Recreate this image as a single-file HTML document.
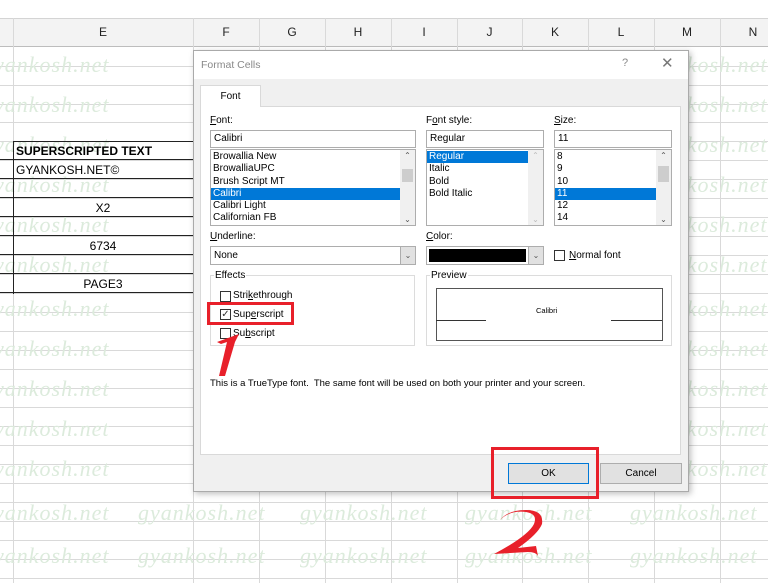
<!DOCTYPE html>
<html><head><meta charset="utf-8"><style>
*{margin:0;padding:0;box-sizing:border-box}
body{width:768px;height:583px;overflow:hidden;background:#fff;font-family:"Liberation Sans",sans-serif;position:relative;font-size:10px;color:#000}
.a{position:absolute}
.t{position:absolute;z-index:2}
.vl{position:absolute;top:18px;bottom:0;width:1px;background:#d9d9d9}
.hl{position:absolute;left:0;right:0;height:1px;background:#d9d9d9}
.ch{position:absolute;top:18px;height:29px;line-height:29px;text-align:center;font-size:12px;color:#222}
.wm{position:absolute;font-family:"Liberation Serif",serif;font-style:italic;font-size:22px;color:#dcebdc;letter-spacing:1px;white-space:nowrap;z-index:1}
.box{position:absolute;background:#fff;border:1px solid #adadad}
.lb{position:absolute;font-size:10px;white-space:nowrap}
.li{height:12.3px;line-height:12.3px;padding-left:2px;font-size:10px;white-space:nowrap}
.sel{background:#0078d7;color:#fff}
.sb{position:absolute;right:0;top:0;bottom:0;width:15px;background:#f0f0f0}
.cb{position:absolute;width:11px;height:11px;border:1px solid #333;background:#fff}
.btn{position:absolute;background:#e1e1e1;border:1px solid #adadad;text-align:center;font-size:10px;height:21px;line-height:19px}
.dlg{z-index:5}
</style></head><body>
<div class="a" style="left:0;top:18px;width:768px;height:29px;background:#f3f3f3;border-bottom:1px solid #bdbdbd;border-top:1px solid #d4d4d4"></div>
<div class="vl" style="left:13px"></div><div class="vl" style="left:193px"></div><div class="vl" style="left:259px"></div><div class="vl" style="left:325px"></div><div class="vl" style="left:391px"></div><div class="vl" style="left:457px"></div><div class="vl" style="left:522px"></div><div class="vl" style="left:588px"></div><div class="vl" style="left:654px"></div><div class="vl" style="left:720px"></div>
<div class="ch" style="left:13px;width:180px">E</div><div class="ch" style="left:193px;width:66px">F</div><div class="ch" style="left:259px;width:66px">G</div><div class="ch" style="left:325px;width:66px">H</div><div class="ch" style="left:391px;width:66px">I</div><div class="ch" style="left:457px;width:65px">J</div><div class="ch" style="left:522px;width:66px">K</div><div class="ch" style="left:588px;width:66px">L</div><div class="ch" style="left:654px;width:66px">M</div><div class="ch" style="left:720px;width:66px">N</div>
<div class="hl" style="top:66px"></div><div class="hl" style="top:85px"></div><div class="hl" style="top:104px"></div><div class="hl" style="top:122px"></div><div class="hl" style="top:141px"></div><div class="hl" style="top:160px"></div><div class="hl" style="top:179px"></div><div class="hl" style="top:198px"></div><div class="hl" style="top:217px"></div><div class="hl" style="top:236px"></div><div class="hl" style="top:255px"></div><div class="hl" style="top:274px"></div><div class="hl" style="top:293px"></div><div class="hl" style="top:312px"></div><div class="hl" style="top:331px"></div><div class="hl" style="top:350px"></div><div class="hl" style="top:369px"></div><div class="hl" style="top:388px"></div><div class="hl" style="top:407px"></div><div class="hl" style="top:426px"></div><div class="hl" style="top:445px"></div><div class="hl" style="top:464px"></div><div class="hl" style="top:483px"></div><div class="hl" style="top:502px"></div><div class="hl" style="top:521px"></div><div class="hl" style="top:540px"></div><div class="hl" style="top:559px"></div><div class="hl" style="top:578px"></div>
<div class="wm" style="left:-18px;top:52px">gyankosh.net</div><div class="wm" style="left:-18px;top:92px">gyankosh.net</div><div class="wm" style="left:-18px;top:132px">gyankosh.net</div><div class="wm" style="left:-18px;top:172px">gyankosh.net</div><div class="wm" style="left:-18px;top:212px">gyankosh.net</div><div class="wm" style="left:-18px;top:252px">gyankosh.net</div><div class="wm" style="left:-18px;top:296px">gyankosh.net</div><div class="wm" style="left:-18px;top:336px">gyankosh.net</div><div class="wm" style="left:-18px;top:376px">gyankosh.net</div><div class="wm" style="left:-18px;top:416px">gyankosh.net</div><div class="wm" style="left:-18px;top:456px">gyankosh.net</div><div class="wm" style="left:-18px;top:500px">gyankosh.net</div><div class="wm" style="left:-18px;top:543px">gyankosh.net</div>
<div class="wm" style="left:138px;top:500px">gyankosh.net</div><div class="wm" style="left:138px;top:543px">gyankosh.net</div>
<div class="wm" style="left:300px;top:500px">gyankosh.net</div><div class="wm" style="left:300px;top:543px">gyankosh.net</div>
<div class="wm" style="left:465px;top:500px">gyankosh.net</div><div class="wm" style="left:465px;top:543px">gyankosh.net</div>
<div class="wm" style="left:630px;top:500px">gyankosh.net</div><div class="wm" style="left:630px;top:543px">gyankosh.net</div>
<div class="wm" style="left:640px;top:52px">gyankosh.net</div><div class="wm" style="left:640px;top:92px">gyankosh.net</div><div class="wm" style="left:640px;top:132px">gyankosh.net</div><div class="wm" style="left:640px;top:172px">gyankosh.net</div><div class="wm" style="left:640px;top:212px">gyankosh.net</div><div class="wm" style="left:640px;top:252px">gyankosh.net</div><div class="wm" style="left:640px;top:296px">gyankosh.net</div><div class="wm" style="left:640px;top:336px">gyankosh.net</div><div class="wm" style="left:640px;top:376px">gyankosh.net</div><div class="wm" style="left:640px;top:416px">gyankosh.net</div><div class="wm" style="left:640px;top:456px">gyankosh.net</div>

<div class="t" style="left:13px;top:141px;width:180px;height:153px;border-top:1px solid #222;border-left:1px solid #222"></div>
<div class="t" style="left:0;top:159px;width:193px;height:1px;background:#222"></div>
<div class="t" style="left:0;top:178px;width:193px;height:1px;background:#222"></div>
<div class="t" style="left:0;top:197px;width:193px;height:1px;background:#222"></div>
<div class="t" style="left:0;top:216px;width:193px;height:1px;background:#222"></div>
<div class="t" style="left:0;top:235px;width:193px;height:1px;background:#222"></div>
<div class="t" style="left:0;top:254px;width:193px;height:1px;background:#222"></div>
<div class="t" style="left:0;top:273px;width:193px;height:1px;background:#222"></div>
<div class="t" style="left:0;top:292px;width:193px;height:1px;background:#222"></div>
<div class="t" style="left:16px;top:144px;font-size:12px;font-weight:bold">SUPERSCRIPTED TEXT</div>
<div class="t" style="left:16px;top:163px;font-size:12px">GYANKOSH.NET©</div>
<div class="t" style="left:13px;top:201px;width:180px;text-align:center;font-size:12px">X2</div>
<div class="t" style="left:13px;top:239px;width:180px;text-align:center;font-size:12px">6734</div>
<div class="t" style="left:13px;top:277px;width:180px;text-align:center;font-size:12px">PAGE3</div>

<div class="a dlg" style="left:193px;top:50px;width:496px;height:442px;">
<div class="a" style="left:0;top:0;width:496px;height:442px;background:#f0f0f0;border:1px solid #aaa;box-shadow:2px 2px 6px rgba(0,0,0,.25)"></div>
<div class="a" style="left:1px;top:1px;width:494px;height:28px;background:#fff"></div>
<div class="a" style="left:8px;top:9px;font-size:10.5px;color:#888">Format Cells</div>
<div class="a" style="left:429px;top:7px;font-size:11px;color:#888">?</div>
<div class="a" style="left:468px;top:4px;font-size:15px;color:#777">✕</div>
<div class="a" style="left:7px;top:56px;width:481px;height:349px;background:#fff;border:1px solid #d9d9d9"></div>
<div class="a" style="left:7px;top:35px;width:61px;height:22px;background:#fff;border:1px solid #d9d9d9;border-bottom:none;text-align:center;line-height:21px;font-size:10px">Font</div>
</div>

<div class="dlg a" style="left:0;top:0;width:768px;height:583px">
<div class="lb" style="left:210px;top:115px"><u>F</u>ont:</div>
<div class="box" style="left:210px;top:130px;width:206px;height:18px"><span style="position:absolute;left:3px;top:2px;font-size:10px">Calibri</span></div>
<div class="box" style="left:210px;top:149px;width:206px;height:77px;padding-top:1px">
<div class="li">Browallia New</div><div class="li">BrowalliaUPC</div><div class="li">Brush Script MT</div><div class="li sel" style="margin-right:15px">Calibri</div><div class="li">Calibri Light</div><div class="li">Californian FB</div>
<div class="sb"><div style="position:absolute;left:2px;top:19px;width:11px;height:13px;background:#cdcdcd"></div><div style="position:absolute;top:1px;width:15px;text-align:center;font-size:8px;color:#555">⌃</div><div style="position:absolute;bottom:1px;width:15px;text-align:center;font-size:8px;color:#555">⌄</div></div></div>

<div class="lb" style="left:426px;top:115px">F<u>o</u>nt style:</div>
<div class="box" style="left:426px;top:130px;width:118px;height:18px"><span style="position:absolute;left:3px;top:2px;font-size:10px">Regular</span></div>
<div class="box" style="left:426px;top:149px;width:118px;height:77px;padding-top:1px">
<div class="li sel" style="margin-right:15px">Regular</div><div class="li">Italic</div><div class="li">Bold</div><div class="li">Bold Italic</div>
<div class="sb"><div style="position:absolute;top:1px;width:15px;text-align:center;font-size:8px;color:#bbb">⌃</div><div style="position:absolute;bottom:1px;width:15px;text-align:center;font-size:8px;color:#bbb">⌄</div></div></div>

<div class="lb" style="left:554px;top:115px"><u>S</u>ize:</div>
<div class="box" style="left:554px;top:130px;width:118px;height:18px"><span style="position:absolute;left:3px;top:2px;font-size:10px">11</span></div>
<div class="box" style="left:554px;top:149px;width:118px;height:77px;padding-top:1px">
<div class="li">8</div><div class="li">9</div><div class="li">10</div><div class="li sel" style="margin-right:15px">11</div><div class="li">12</div><div class="li">14</div>
<div class="sb"><div style="position:absolute;left:2px;top:16px;width:11px;height:16px;background:#cdcdcd"></div><div style="position:absolute;top:1px;width:15px;text-align:center;font-size:8px;color:#555">⌃</div><div style="position:absolute;bottom:1px;width:15px;text-align:center;font-size:8px;color:#555">⌄</div></div></div>

<div class="lb" style="left:210px;top:231px"><u>U</u>nderline:</div>
<div class="box" style="left:210px;top:246px;width:206px;height:19px"><span style="position:absolute;left:3px;top:3px;font-size:10px">None</span><div style="position:absolute;right:0;top:0;width:15px;height:17px;background:#e1e1e1;border-left:1px solid #adadad;text-align:center;font-size:8px;color:#555;line-height:17px">⌄</div></div>
<div class="lb" style="left:426px;top:231px"><u>C</u>olor:</div>
<div class="box" style="left:426px;top:246px;width:118px;height:19px"><div style="position:absolute;left:2px;top:2px;width:97px;height:13px;background:#000"></div><div style="position:absolute;right:0;top:0;width:15px;height:17px;background:#e1e1e1;border-left:1px solid #adadad;text-align:center;font-size:8px;color:#555;line-height:17px">⌄</div></div>
<div class="cb" style="left:554px;top:250px"></div>
<div class="lb" style="left:569px;top:250px"><u>N</u>ormal font</div>

<div class="a" style="left:210px;top:275px;width:205px;height:71px;border:1px solid #dcdcdc"></div>
<div class="lb" style="left:214px;top:270px;background:#fff;padding:0 1px">Effects</div>
<div class="cb" style="left:220px;top:291px"></div><div class="lb" style="left:233px;top:290px">Stri<u>k</u>ethrough</div>
<div class="cb" style="left:220px;top:309px;font-size:10px;line-height:9px;text-align:center;color:#333">✓</div><div class="lb" style="left:233px;top:309px">Sup<u>e</u>rscript</div>
<div class="cb" style="left:220px;top:328px"></div><div class="lb" style="left:233px;top:328px">Su<u>b</u>script</div>
<div class="a" style="left:426px;top:275px;width:246px;height:71px;border:1px solid #dcdcdc"></div>
<div class="lb" style="left:430px;top:270px;background:#fff;padding:0 1px">Preview</div>
<div class="a" style="left:436px;top:288px;width:227px;height:53px;border:1px solid #555"></div>
<div class="a" style="left:436px;top:320px;width:50px;height:1px;background:#333"></div>
<div class="a" style="left:611px;top:320px;width:51px;height:1px;background:#333"></div>
<div class="a" style="left:536px;top:306px;font-size:7.5px">Calibri</div>
<div class="lb" style="left:210px;top:378px;font-size:9.5px">This is a TrueType font.&nbsp; The same font will be used on both your printer and your screen.</div>

<div class="btn" style="left:508px;top:463px;width:81px;border:1px solid #0078d7">OK</div>
<div class="btn" style="left:600px;top:463px;width:82px">Cancel</div>

<div class="a" style="left:207px;top:302px;width:87px;height:23px;border:3px solid #e8202a"></div>
<div class="a" style="left:491px;top:447px;width:108px;height:52px;border:3px solid #e8202a"></div>
<svg class="a" style="left:205px;top:330px" width="40" height="50" viewBox="0 0 40 50"><path d="M34 4 L12 12 L16 14 L22 12 L14 46 L20 46 L30 12 Z" fill="#e8202a"/></svg>
<svg class="a" style="left:488px;top:508px" width="60" height="50" viewBox="0 0 60 50"><path d="M12 12 Q22 2 38 4 Q50 6 46 16 Q40 28 6 46 L40 44 Q48 44 50 48 L48 38 L30 40 Q50 26 54 16 Q56 2 38 2 Q20 2 12 12 Z" fill="#e8202a"/></svg>
</div>
</body></html>
